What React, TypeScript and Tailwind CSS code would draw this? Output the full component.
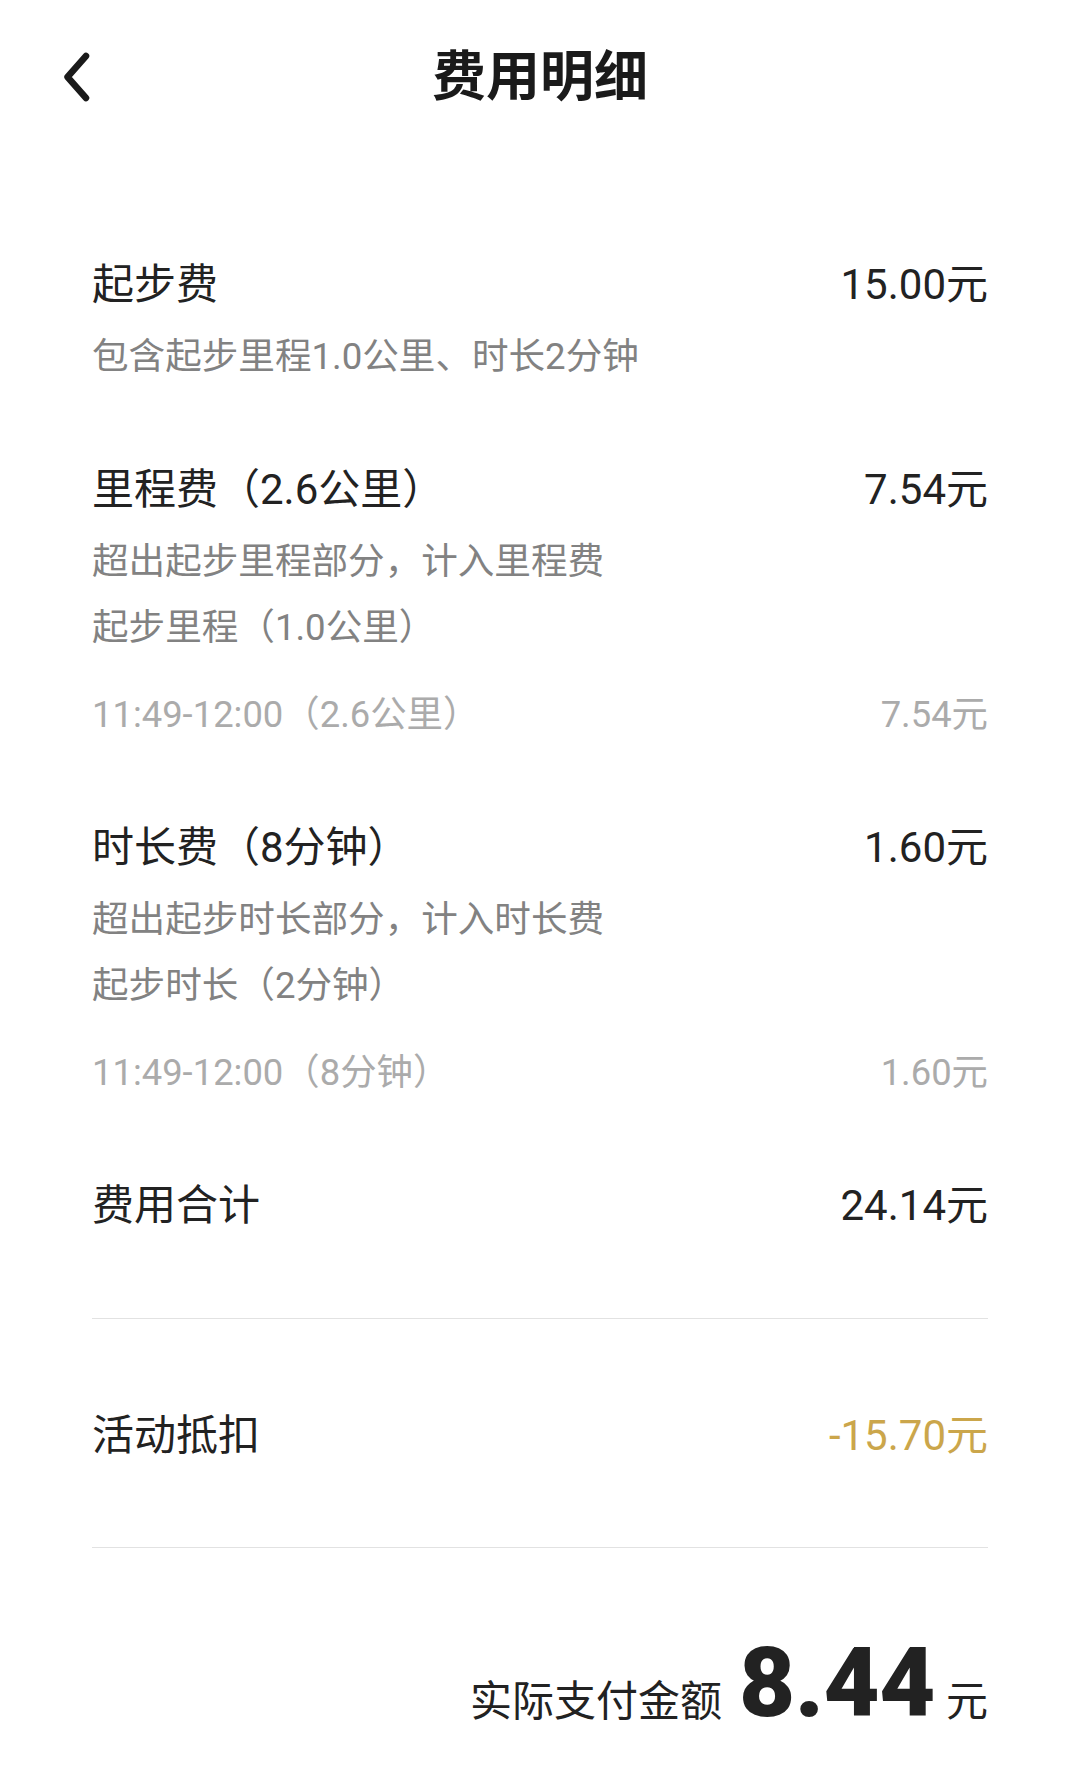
import React from "react";

const FONT = { fontFamily: 'Roboto, "Noto Sans CJK SC", sans-serif' };

function MainRow({ label, value, valueClass = "text-[#222222]", className = "" }: { label: string; value: string; valueClass?: string; className?: string }) {
  return (
    <div className={`flex h-[60px] items-center justify-between text-[42px] leading-[60px] text-[#222222] ${className}`}>
      <span>{label}</span>
      <span className={valueClass}>{value}</span>
    </div>
  );
}

function SubLine({ text, className = "" }: { text: string; className?: string }) {
  return <div className={`flex h-[66px] items-center text-[36.6px] leading-[66px] text-[#828282] ${className}`}>{text}</div>;
}

function TimeLine({ text, value }: { text: string; value: string }) {
  return (
    <div className="mt-[21px] flex h-[66px] items-center justify-between text-[36.4px] leading-[66px] text-[#ababab]">
      <span>{text}</span>
      <span>{value}</span>
    </div>
  );
}

export default function App() {
  return (
    <div className="min-h-[1769px] w-[1080px] bg-white" style={FONT}>
      <header className="relative flex h-[154px] items-center justify-center">
        <button className="absolute left-[58px] top-[51px] flex h-[52px] w-[36px] items-center justify-center">
          <svg width="32" height="52" viewBox="0 0 32 52" fill="none">
            <path d="M26 5 L7.5 26 L26 47" stroke="#1a1a1a" strokeWidth="6.5" strokeLinecap="round" strokeLinejoin="round" />
          </svg>
        </button>
        <h1 className="text-[54px] font-bold text-[#1a1a1a]">费用明细</h1>
      </header>

      <main className="px-[92px] pt-[101px]">
        <section>
          <MainRow label="起步费" value="15.00元" />
          <SubLine text="包含起步里程1.0公里、时长2分钟" className="mt-[9px]" />
        </section>

        <section className="mt-[70px]">
          <MainRow label="里程费（2.6公里）" value="7.54元" />
          <SubLine text="超出起步里程部分，计入里程费" className="mt-[9px]" />
          <SubLine text="起步里程（1.0公里）" />
          <TimeLine text="11:49-12:00（2.6公里）" value="7.54元" />
        </section>

        <section className="mt-[70px]">
          <MainRow label="时长费（8分钟）" value="1.60元" />
          <SubLine text="超出起步时长部分，计入时长费" className="mt-[9px]" />
          <SubLine text="起步时长（2分钟）" />
          <TimeLine text="11:49-12:00（8分钟）" value="1.60元" />
        </section>

        <section className="mt-[70px]">
          <MainRow label="费用合计" value="24.14元" />
        </section>

        <div className="mt-[82px] h-px bg-[#e2e2e2]" />

        <MainRow label="活动抵扣" value="-15.70元" valueClass="text-[#cba64b]" className="mt-[87px] mb-[81px]" />

        <div className="h-px bg-[#e2e2e2]" />

        <div className="mt-[87px] flex items-baseline justify-end text-[#222222]">
          <span className="text-[42px]">实际支付金额</span>
          <span className="ml-[17px] text-[97px] font-black leading-none tracking-[-0.5px]">8.44</span>
          <span className="ml-[11px] text-[42px]">元</span>
        </div>
      </main>
    </div>
  );
}
